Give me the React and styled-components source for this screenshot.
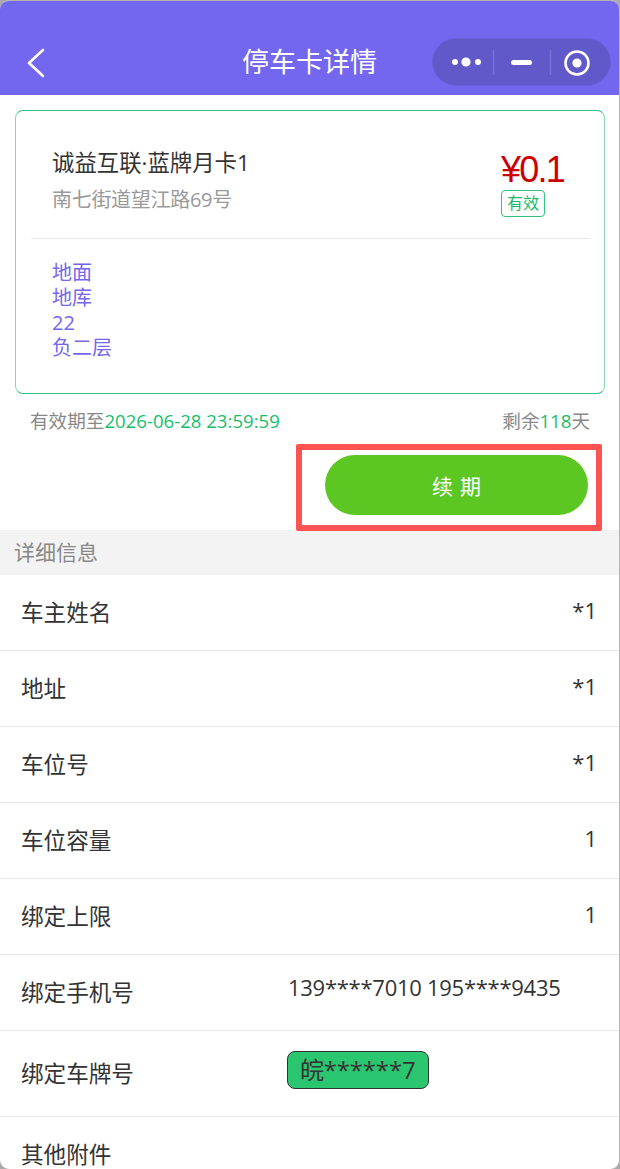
import React from 'react';
import styled, { createGlobalStyle } from 'styled-components';

const GlobalStyle = createGlobalStyle`
  html, body {
    margin: 0;
    padding: 0;
    background: #a9a9a9;
  }
  body {
    font-family: "Open Sans", "Noto Sans CJK SC", sans-serif;
  }
`;

const Page = styled.div`
  position: relative;
  width: 620px;
  height: 1169px;
  overflow: hidden;
  box-sizing: border-box;
  border-top: 1px solid #b5b5b5;
  border-right: 1px solid #b5b5b5;
  border-radius: 9px;
  background: #fff;
  color: #333;
`;

const NavBar = styled.header`
  position: relative;
  height: 94px;
  box-sizing: border-box;
  padding-top: 37px;
  background: #7367f0;
  display: flex;
  align-items: flex-start;
  justify-content: center;
`;

const BackIcon = styled.svg`
  position: absolute;
  left: 26px;
  top: 47px;
`;

const NavTitle = styled.h1`
  margin: 0;
  height: 48px;
  line-height: 48px;
  font-size: 27px;
  font-weight: 400;
  color: #fff;
`;

const Capsule = styled.div`
  position: absolute;
  left: 432px;
  top: 37px;
  width: 179px;
  height: 48px;
  box-sizing: border-box;
  border: 1px solid #6a60d8;
  border-radius: 24px;
  background: #6158c9;
`;

const CapsuleIcon = styled.svg`
  display: block;
`;

const Card = styled.section`
  margin: 15px 14px 0 15px;
  height: 284px;
  box-sizing: border-box;
  border: 1px solid #2ec27e;
  border-left-color: #86d8ac;
  border-right-color: #86d8ac;
  border-radius: 8px;
  padding: 0 14px 0 15px;
`;

const CardTop = styled.div`
  height: 128px;
  box-sizing: border-box;
  padding: 37px 0 0 21px;
  display: flex;
  justify-content: space-between;
  border-bottom: 1px solid #e8e8e8;
`;

const CardName = styled.div`
  font-size: 22.4px;
  line-height: 30px;
  color: #333;
`;

const CardAddress = styled.div`
  margin-top: 8px;
  font-size: 20px;
  line-height: 28px;
  letter-spacing: -0.3px;
  color: #999;
`;

const PriceBox = styled.div`
  width: 89px;
  margin-top: 1px;
`;

const Price = styled.div`
  font-family: "Liberation Sans", sans-serif;
  font-size: 36px;
  line-height: 41px;
  letter-spacing: -1.8px;
  color: #cc0000;
`;

const StatusTag = styled.span`
  display: block;
  width: 44px;
  height: 27px;
  box-sizing: border-box;
  border: 1px solid #2ec27e;
  border-radius: 4px;
  font-size: 16px;
  line-height: 25px;
  text-align: center;
  color: #19b867;
`;

const SpaceList = styled.ul`
  list-style: none;
  margin: 0;
  padding: 21px 0 0 21px;
  font-size: 20px;
  line-height: 25px;
  color: #7367f0;
`;

const ValidRow = styled.div`
  margin: 12px 29px 0 30px;
  display: flex;
  justify-content: space-between;
  font-size: 18.6px;
  line-height: 30px;
  color: #888;
`;

const Accent = styled.span`
  color: #19be6b;
`;

const ActionRow = styled.div`
  height: 94px;
  box-sizing: border-box;
  padding: 19px 31px 0 0;
  display: flex;
  justify-content: flex-end;
`;

const RenewButton = styled.button`
  width: 263px;
  height: 60px;
  padding: 0;
  border: 0;
  border-radius: 30px;
  background: #5cc722;
  color: #fff;
  font-family: inherit;
  font-size: 21px;
  letter-spacing: 7px;
  text-indent: 7px;
`;

const Highlight = styled.div`
  position: absolute;
  left: 296px;
  top: 443px;
  width: 306px;
  height: 87px;
  box-sizing: border-box;
  border: 6px solid #fd5353;
  border-radius: 2px;
  pointer-events: none;
`;

const SectionBar = styled.div`
  height: 45px;
  box-sizing: border-box;
  padding-left: 14px;
  background: #f3f3f3;
  font-size: 21px;
  line-height: 45px;
  color: #888;
`;

const Row = styled.div`
  height: ${(p) => p.$height || 76}px;
  box-sizing: border-box;
  padding: 0 22px 0 21px;
  display: flex;
  justify-content: space-between;
  border-bottom: 1px solid #e8e8e8;
`;

const Label = styled.div`
  padding-top: ${(p) => p.$top || 21}px;
  font-size: 22.6px;
  line-height: 34px;
  color: #333;
`;

const Value = styled.div`
  width: 309px;
  padding-top: ${(p) => p.$top || 18}px;
  font-size: 22px;
  line-height: 34px;
  color: #333;
  text-align: ${(p) => p.$align || 'right'};
`;

const PhoneList = styled.span`
  letter-spacing: -0.27px;
`;

const Plate = styled.span`
  display: inline-block;
  height: 38px;
  width: 142px;
  box-sizing: border-box;
  margin-left: -1px;
  padding-left: 12px;
  border: 1px solid #333;
  border-radius: 8px;
  background: #2ac670;
  font-size: 24px;
  line-height: 36px;
  letter-spacing: -0.2px;
  text-align: left;
  color: #333;
`;

const rows = [
  { label: '车主姓名', value: '*1' },
  { label: '地址', value: '*1' },
  { label: '车位号', value: '*1' },
  { label: '车位容量', value: '1' },
  { label: '绑定上限', value: '1' },
];

export default function App() {
  return (
    <Page>
      <GlobalStyle />
      <NavBar>
        <BackIcon width="20" height="30" viewBox="0 0 20 30" fill="none">
          <path d="M17 2 L3 15 L17 28" stroke="#fff" strokeWidth="2.6" strokeLinecap="round" strokeLinejoin="round" />
        </BackIcon>
        <NavTitle>停车卡详情</NavTitle>
        <Capsule>
          <CapsuleIcon width="177" height="46" viewBox="0 0 177 46" fill="none">
            <circle cx="22" cy="23" r="3" fill="#fff" />
            <circle cx="33" cy="23" r="4.6" fill="#fff" />
            <circle cx="45" cy="23" r="3" fill="#fff" />
            <line x1="60.5" y1="11" x2="60.5" y2="36" stroke="#7a71d6" strokeWidth="1.5" />
            <rect x="78" y="21" width="21" height="5" rx="2.5" fill="#fff" />
            <line x1="117.5" y1="11" x2="117.5" y2="36" stroke="#7a71d6" strokeWidth="1.5" />
            <circle cx="144" cy="24" r="11.5" stroke="#fff" strokeWidth="2.6" />
            <circle cx="144" cy="24" r="4.6" fill="#fff" />
          </CapsuleIcon>
        </Capsule>
      </NavBar>

      <Card>
        <CardTop>
          <div>
            <CardName>诚益互联·蓝牌月卡1</CardName>
            <CardAddress>南七街道望江路69号</CardAddress>
          </div>
          <PriceBox>
            <Price>¥0.1</Price>
            <StatusTag>有效</StatusTag>
          </PriceBox>
        </CardTop>
        <SpaceList>
          <li>地面</li>
          <li>地库</li>
          <li>22</li>
          <li>负二层</li>
        </SpaceList>
      </Card>

      <ValidRow>
        <span>
          有效期至<Accent>2026-06-28 23:59:59</Accent>
        </span>
        <span>
          剩余<Accent>118</Accent>天
        </span>
      </ValidRow>

      <ActionRow>
        <RenewButton>续期</RenewButton>
      </ActionRow>
      <Highlight />

      <SectionBar>详细信息</SectionBar>
      {rows.map((row) => (
        <Row key={row.label}>
          <Label>{row.label}</Label>
          <Value>{row.value}</Value>
        </Row>
      ))}
      <Row>
        <Label>绑定手机号</Label>
        <Value $align="left" $top={15}>
          <PhoneList>139****7010 195****9435</PhoneList>
        </Value>
      </Row>
      <Row $height={86}>
        <Label $top={26}>绑定车牌号</Label>
        <Value $align="left" $top={20}>
          <Plate>皖******7</Plate>
        </Value>
      </Row>
      <Row>
        <Label>其他附件</Label>
      </Row>
    </Page>
  );
}
